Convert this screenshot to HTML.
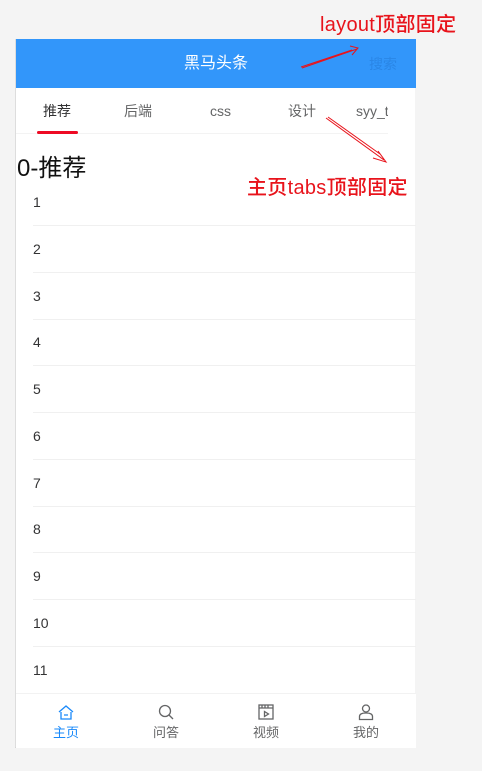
<!DOCTYPE html>
<html><head><meta charset="utf-8"><style>
*{margin:0;padding:0;box-sizing:border-box}
body{width:482px;height:771px;background:#f4f4f4;font-family:"Liberation Sans","Noto Sans CJK SC",sans-serif;position:relative;overflow:hidden}
.phone{position:absolute;left:15px;top:39px;width:400px;height:709px;background:#fff;border-left:1px solid #ddd;border-bottom:1px solid #ccc}
.hdr{position:absolute;left:0;top:0;width:400px;height:49px;background:#3296fa;color:#fff;font-size:16px;text-align:center;line-height:49px}
.srch{position:absolute;right:19px;top:0;color:#2a86e6;font-size:14px;line-height:51px}
.tabs{position:absolute;left:0;top:49px;width:372px;height:46px;border-bottom:1px solid #f3f3f3}
.tab{position:absolute;top:0;line-height:46px;font-size:14px;color:#646566}
.ind{position:absolute;left:21px;top:43px;width:41px;height:3px;background:#ee0a24;border-radius:2px}
.title{position:absolute;left:1px;top:109px;font-size:24px;color:#111}
.item{position:absolute;left:17px;width:383px;height:47px;border-bottom:1px solid #f0f0f0;font-size:14px;color:#323233;line-height:47px}
.bar{position:absolute;left:0;top:654px;width:400px;height:55px;border-top:1px solid #f2f2f2;background:#fff}
.bt{position:absolute;top:0;width:100px;text-align:center;font-size:13px;color:#646566}
.bt svg{display:block;margin:9px auto 1px}
.red{position:absolute;color:#e8131b;font-size:20px;font-weight:500;letter-spacing:0.3px;white-space:nowrap}
</style></head><body>
<div class="phone">
<div class="hdr">黑马头条<span class="srch">搜索</span></div>
<div class="tabs">
<span class="tab" style="left:27px;color:#323233">推荐</span>
<span class="tab" style="left:108px">后端</span>
<span class="tab" style="left:194px">css</span>
<span class="tab" style="left:272px">设计</span>
<span class="tab" style="left:340px;width:32px;overflow:hidden;white-space:nowrap">syy_test</span>
<div class="ind"></div>
</div>
<div class="title">0-推荐</div>
<div class="item" style="top:140px">1</div>
<div class="item" style="top:187px">2</div>
<div class="item" style="top:234px">3</div>
<div class="item" style="top:280px">4</div>
<div class="item" style="top:327px">5</div>
<div class="item" style="top:374px">6</div>
<div class="item" style="top:421px">7</div>
<div class="item" style="top:467px">8</div>
<div class="item" style="top:514px">9</div>
<div class="item" style="top:561px">10</div>
<div class="item" style="top:608px">11</div>
<div class="bar">
<div class="bt" style="left:0;color:#1989fa"><svg width="18" height="18" viewBox="0 0 18 18" fill="none" stroke="#1989fa" stroke-width="1.3"><path d="M2 9L9 3l7 6M4 9v7h10V9M7 12h4"/></svg>主页</div>
<div class="bt" style="left:100px"><svg width="18" height="18" viewBox="0 0 18 18" fill="none" stroke="#646566" stroke-width="1.3"><circle cx="8" cy="8" r="5.5"/><path d="M12 12l4 4"/></svg>问答</div>
<div class="bt" style="left:200px"><svg width="18" height="18" viewBox="0 0 18 18" fill="none" stroke="#646566" stroke-width="1.3"><rect x="2" y="2" width="14" height="14"/><path d="M2 5h14M5 2v3M8 2v3M11 2v3M7.5 8.5v5l4-2.5z"/></svg>视频</div>
<div class="bt" style="left:300px"><svg width="18" height="18" viewBox="0 0 18 18" fill="none" stroke="#646566" stroke-width="1.3"><circle cx="9" cy="5.5" r="3.5"/><path d="M2.5 16.5v-3c0-2 2-3.5 6.5-3.5s6.5 1.5 6.5 3.5v3z"/></svg>我的</div>
</div>
</div>
<div class="red" style="left:320px;top:8px">layout顶部固定</div>
<div class="red" style="left:247px;top:171px">主页tabs顶部固定</div>
<svg style="position:absolute;left:0;top:0" width="482" height="771" fill="none" stroke="#e8131b" stroke-width="1"><path d="M302 68L357 49M350 46L358 48L352 55M301 67L352 50"/><path d="M326 118L384 160M378 151L386 162L373 158M328 117L380 154"/></svg>
</body></html>
